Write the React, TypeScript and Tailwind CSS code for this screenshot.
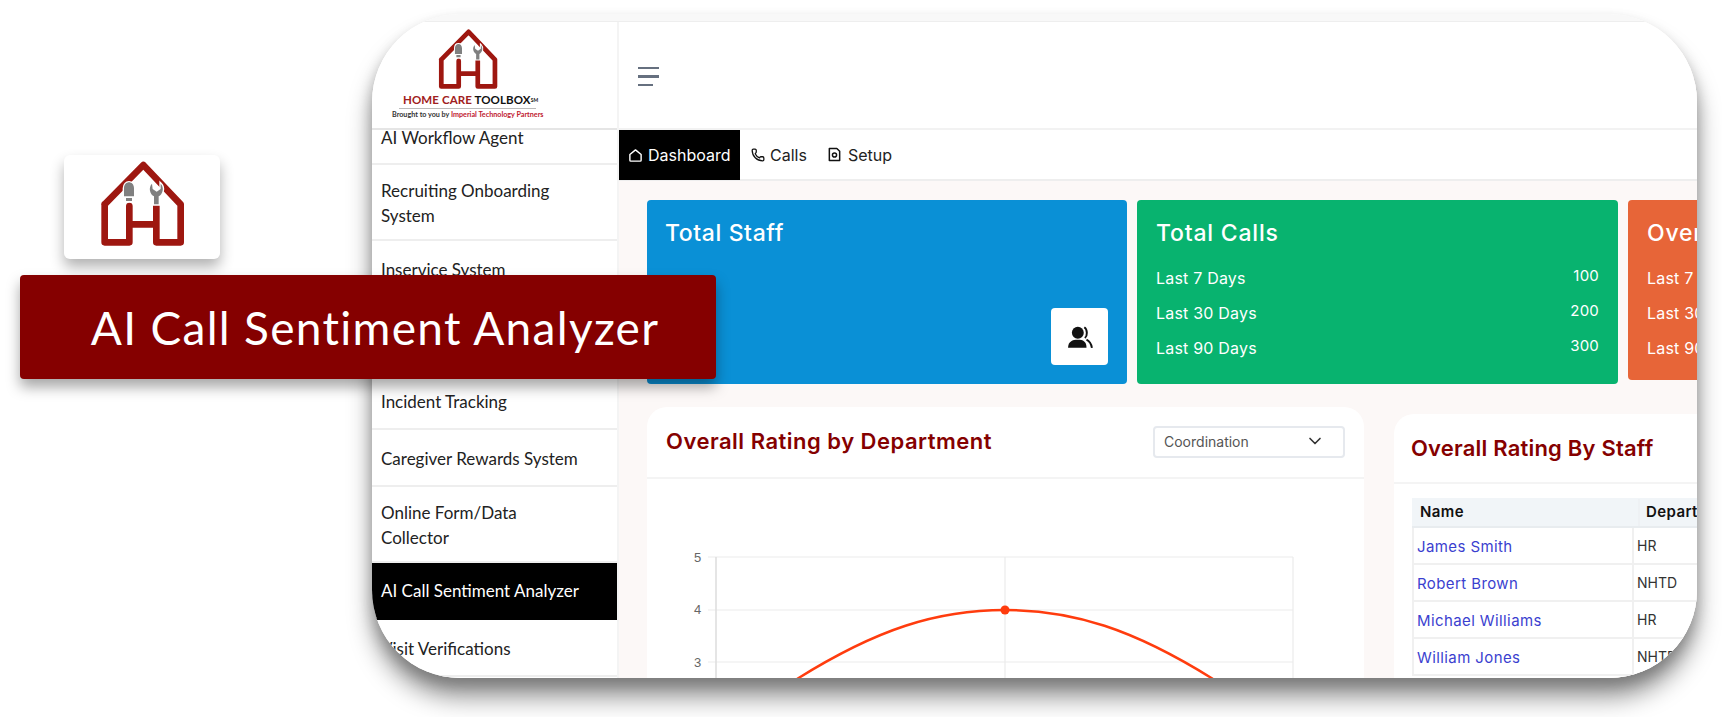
import React from 'react';
import { ChevronDown, Phone } from 'lucide-react';

const Logo = ({ className }: { className: string }) => (
  <svg viewBox="180 60 255 255" className={className}>
    <path
      d="M194 190 L310 72 L422 190 V304 H349 V195 M268 195 V304 H194 V190 M268 250 H349"
      fill="none"
      stroke="#9e1710"
      strokeWidth="20"
      strokeLinecap="round"
      strokeLinejoin="round"
    />
    <path
      d="M252 142 C252 118 282 118 282 142 V166 H252 Z M258 171 H276 V180 H258 Z"
      fill="#808080"
      stroke="#fff"
      strokeWidth="8"
      paintOrder="stroke"
    />
    <path
      d="M336 128 C324 140 330 160 342 166 V190 H356 V166 C368 160 374 140 362 128 L362 144 L350 152 L338 144 Z"
      fill="#808080"
      stroke="#fff"
      strokeWidth="8"
      paintOrder="stroke"
    />
  </svg>
);

const HomeIcon = () => (
  <svg viewBox="0 0 16 16" className="w-[15px] h-[15px]" fill="none" stroke="#fff" strokeWidth="1.5" strokeLinejoin="round">
    <path d="M2 7 L8 2 L14 7 V13 C14 13.6 13.6 14 13 14 H3 C2.4 14 2 13.6 2 13 Z" />
  </svg>
);

const SetupIcon = () => (
  <svg viewBox="0 0 16 16" className="w-[15px] h-[15px]" fill="none" stroke="#111" strokeWidth="1.6" strokeLinejoin="round">
    <path d="M2.5 1.5 H10.5 L13.5 4.5 V14.5 H2.5 Z" />
    <circle cx="8" cy="8.5" r="2.2" />
  </svg>
);

const StaffIcon = () => (
  <svg viewBox="0 0 24 24" className="w-[26px] h-[26px]" fill="#111">
    <circle cx="10" cy="8" r="5.5" />
    <path d="M1 22 C1 16 5 14.5 10 14.5 C15 14.5 18 16 18 22 Z" />
    <path d="M16 3 C19 5 19 11 16.5 13 M18 14.5 C21 16 22.5 19 23 22" fill="none" stroke="#111" strokeWidth="1.8" />
  </svg>
);

const SideRow = ({ lines, active }: { lines: string[]; active?: boolean }) => (
  <div
    className={
      'flex flex-col justify-center px-[9px] text-[17px] leading-[25px] border-b-2 ' +
      (active ? 'bg-black text-white border-black' : 'pt-[2px] text-[#222] border-[#eeeeee]') +
      (lines.length > 1 ? ' h-[76px]' : ' h-[57px]')
    }
  >
    {lines.map((l) => (
      <span key={l}>{l}</span>
    ))}
  </div>
);

const StatRow = ({ label, value }: { label: string; value: string }) => (
  <div className="flex justify-between h-[35px] text-[16px] tracking-[0.2px] leading-[22px] text-white">
    <span>{label}</span>
    <span className="-mt-[2px] text-[15px]">{value}</span>
  </div>
);

const StatCard = ({ title, color, height }: { title: string; color: string; height: string }) => (
  <div className={'w-[481px] shrink-0 rounded-[4px] px-[19px] pt-[19px] ' + color + ' ' + height}>
    <h3 className="text-[23px] font-medium tracking-[0.8px] leading-[28px] text-white mb-[20px]">{title}</h3>
    <StatRow label="Last 7 Days" value="100" />
    <StatRow label="Last 30 Days" value="200" />
    <StatRow label="Last 90 Days" value="300" />
  </div>
);

const staff = [
  ['James Smith', 'HR'],
  ['Robert Brown', 'NHTD'],
  ['Michael Williams', 'HR'],
  ['William Jones', 'NHTD'],
];

export default function App() {
  return (
    <div className="relative w-[1722px] h-[717px] overflow-hidden bg-white pt-[14px] pl-[372px] font-['Inter',sans-serif]">
      {/* browser style frame */}
      <div className="w-[1325px] h-[664px] rounded-[88px] overflow-hidden bg-white flex flex-col shadow-[0_20px_24px_rgba(0,0,0,0.4),0_8px_14px_rgba(0,0,0,0.22)]">
        <div className="h-[8px] shrink-0 bg-[#f8f8f8] border-b border-[#eeeeee]" />
        <div className="flex flex-1 min-h-0">
          <aside className="w-[247px] shrink-0 flex flex-col overflow-hidden bg-white border-r-2 border-[#f4f4f4] font-['Lato',sans-serif]">
            <div className="h-[108px] shrink-0 flex flex-col items-start border-b-2 border-[#e5e5e5]">
              <Logo className="w-[60px] h-[60px] mt-[7px] ml-[66px]" />
              <div className="mt-[4px] ml-[31px] text-[11.5px] leading-[14px] font-bold tracking-[0.1px] whitespace-nowrap text-[#a02020]">
                HOME CARE <span className="text-[#111]">TOOLBOX</span>
                <sup className="text-[5px] text-[#111]">SM</sup>
              </div>
              <div className="w-[137px] ml-[27px] mt-[1px] border-t border-[#bbbbbb]" />
              <div className="text-[7.2px] leading-[11px] ml-[20px] font-bold whitespace-nowrap text-[#333]">
                Brought to you by <span className="text-[#c02030]">Imperial Technology Partners</span>
              </div>
            </div>
            <div className="h-[35px] shrink-0 px-[9px] text-[17px] leading-[16px] text-[#222] border-b-2 border-[#eeeeee]">
              AI Workflow Agent
            </div>
            <SideRow lines={['Recruiting Onboarding', 'System']} />
            <SideRow lines={['Inservice System']} />
            <div className="h-[75px] shrink-0 border-b-2 border-[#eeeeee]" />
            <SideRow lines={['Incident Tracking']} />
            <SideRow lines={['Caregiver Rewards System']} />
            <SideRow lines={['Online Form/Data', 'Collector']} />
            <SideRow lines={['AI Call Sentiment Analyzer']} active />
            <SideRow lines={['Visit Verifications']} />
          </aside>

          <main className="flex-1 min-w-0 flex flex-col bg-[#fcf8f7] overflow-hidden">
            <div className="h-[108px] shrink-0 bg-white border-b-2 border-[#f2f2f2] flex items-center pl-[19px]">
              <div className="flex flex-col gap-[6px] mt-[3px]">
                <span className="block w-[21px] h-[2.5px] bg-[#66707f]" />
                <span className="block w-[21px] h-[2.5px] bg-[#66707f]" />
                <span className="block w-[15px] h-[2.5px] bg-[#66707f]" />
              </div>
            </div>
            <nav className="h-[51px] shrink-0 bg-white border-b-2 border-[#eeeeee] flex text-[16px] text-[#222]">
              <a className="w-[121px] h-[50px] bg-black text-white flex items-center gap-[5px] pl-[9px]">
                <HomeIcon /> Dashboard
              </a>
              <a className="flex items-center gap-[5px] ml-[11px]">
                <Phone className="w-[14px] h-[14px] text-[#111]" strokeWidth={2.2} /> Calls
              </a>
              <a className="flex items-center gap-[6px] ml-[20px]">
                <SetupIcon /> Setup
              </a>
            </nav>

            <div className="flex-1 min-h-0 pl-[28px] pt-[19px]">
              <div className="flex gap-[10px] items-start">
                <div className="relative w-[480px] h-[184px] shrink-0 rounded-[4px] bg-[#0a90d6] px-[18px] pt-[19px]">
                  <h3 className="text-[23px] font-medium tracking-[0.6px] leading-[28px] text-white">Total Staff</h3>
                  <div className="absolute right-[19px] bottom-[19px] w-[57px] h-[57px] rounded-[4px] bg-white flex items-center justify-center">
                    <StaffIcon />
                  </div>
                </div>
                <StatCard title="Total Calls" color="bg-[#08b36f]" height="h-[184px]" />
                <StatCard title="Overall Rating" color="bg-[#e76538]" height="h-[180px]" />
              </div>

              <div className="flex gap-[30px] mt-[23px]">
                <section className="w-[717px] h-[291px] shrink-0 bg-white rounded-[20px]">
                  <div className="h-[72px] border-b-2 border-[#f4f4f4] flex items-center justify-between pl-[19px] pr-[19px]">
                    <h3 className="text-[22px] font-semibold tracking-[0.5px] text-[#850000] mt-[-1px]">Overall Rating by Department</h3>
                    <div className="w-[192px] h-[32px] border-2 border-[#e6e9ee] rounded-[4px] flex items-center justify-between pl-[9px] pr-[18px] pb-[2px] text-[14px] text-[#555]">
                      Coordination
                      <ChevronDown className="w-[20px] h-[20px] text-[#333]" />
                    </div>
                  </div>
                  <svg width="717" height="201" className="block">
                    <g stroke="#ececec" strokeWidth="1.2">
                      <path d="M61 78 H646 M61 131 H646 M61 183 H646" />
                      <path d="M358 78 V201 M646 78 V201" />
                    </g>
                    <path d="M69 78 V201" stroke="#dddddd" strokeWidth="1.5" />
                    <g fill="#666" fontSize="13" fontFamily="Liberation Sans, sans-serif">
                      <text x="47" y="83">5</text>
                      <text x="47" y="135">4</text>
                      <text x="47" y="188">3</text>
                    </g>
                    <path
                      d="M120 218 L150 200 C230 150 290 131 358 131 C426 131 486 150 566 200 L596 218"
                      fill="none"
                      stroke="#ff3c0e"
                      strokeWidth="2.5"
                    />
                    <circle cx="358" cy="131" r="4.5" fill="#ff3c0e" />
                  </svg>
                </section>

                <section className="w-[500px] shrink-0 h-[291px] bg-white rounded-tl-[20px] mt-[7px]">
                  <div className="h-[70px] border-b-2 border-[#f4f4f4] flex items-center pl-[17px]">
                    <h3 className="text-[22px] font-semibold tracking-[0.2px] text-[#850000]">Overall Rating By Staff</h3>
                  </div>
                  <div className="ml-[18px] mt-[14px]">
                    <div className="flex h-[30px] items-center pt-[1px] bg-[#f1f5f8] text-[15px] tracking-[0.4px] font-semibold text-[#111] border-b-2 border-[#e8ecef]">
                      <div className="w-[226px] pl-[8px]">Name</div>
                      <div className="border-l-2 border-[#eef1f4] h-full flex items-center pl-[6px]">Department</div>
                    </div>
                    {staff.map(([name, dep]) => (
                      <div key={name} className="flex h-[37px] items-center text-[15px] tracking-[0.4px] border-b-2 border-l-2 border-[#f0f0f0]">
                        <div className="w-[218px] pl-[3px] pt-[4px] text-[#3b3fcf]">{name}</div>
                        <div className="border-l-2 border-[#f0f0f0] h-full flex items-center pl-[3px] text-[#333] text-[14px] tracking-normal">{dep}</div>
                      </div>
                    ))}
                  </div>
                </section>
              </div>
            </div>
          </main>
        </div>
      </div>

      {/* app logo tile and title banner on top of the frame */}
      <div className="absolute left-[64px] top-[155px] w-[156px] h-[104px] rounded-[6px] bg-white flex justify-center pt-[6px] shadow-[0_8px_14px_rgba(0,0,0,0.3)]">
        <Logo className="w-[85px] h-[85px]" />
      </div>
      <div className="absolute left-[20px] top-[275px] w-[696px] h-[104px] rounded-[4px] bg-[#850000] flex items-center justify-center pl-[14px] text-white text-[46px] tracking-[1.3px] font-['Lato',sans-serif] shadow-[0_8px_14px_rgba(0,0,0,0.35)]">
        AI Call Sentiment Analyzer
      </div>
    </div>
  );
}
